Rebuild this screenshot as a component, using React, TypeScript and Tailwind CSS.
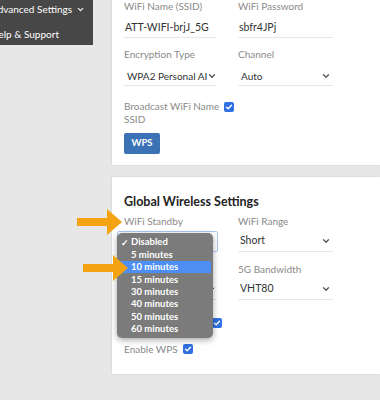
import React from 'react';
import { ChevronDown } from 'lucide-react';

const Check = ({ className = '' }: { className?: string }) => (
  <span className={`inline-flex items-center justify-center w-[10px] h-[10px] rounded-[2px] bg-[#2f6fe0] ${className}`}>
    <svg width="8" height="8" viewBox="0 0 8 8">
      <path d="M1.5 4.2 L3.2 5.8 L6.5 2.2" fill="none" stroke="#fff" strokeWidth="1.4" strokeLinecap="round" strokeLinejoin="round" />
    </svg>
  </span>
);

const Field = ({ label, value, select = false }: { label: string; value: string; select?: boolean }) => (
  <div className="flex flex-col">
    <span className="h-[12px] leading-[12px] text-[10px] text-[#8a8a8a] whitespace-nowrap">{label}</span>
    <div className={`mt-[7px] h-[19px] flex items-center justify-between border-b border-[#e6e6e6] pr-[2px] text-[10.5px] text-[#333] whitespace-nowrap ${select ? 'pl-[3px]' : 'pl-[1px]'}`}>
      <span className={select ? 'text-[10px]' : ''}>{value}</span>
      {select && <ChevronDown size={10} strokeWidth={3} className="text-[#555] shrink-0" />}
    </div>
  </div>
);

const Arrow = ({ className = '' }: { className?: string }) => (
  <svg className={className} width="46" height="28" viewBox="0 0 46 28">
    <path d="M0 10 H30 V1 L45 14 L30 27 V18 H0 Z" fill="#f6a313" />
  </svg>
);

const options = ['Disabled', '5 minutes', '10 minutes', '15 minutes', '30 minutes', '40 minutes', '50 minutes', '60 minutes'];

export default function App() {
  return (
    <div className="relative w-[380px] h-[400px] overflow-hidden bg-[#e7e7e7] flex font-['Lato','Open_Sans',sans-serif]">
      {/* Sidebar */}
      <aside className="w-[93px] shrink-0 overflow-hidden">
        <div className="h-[45px] bg-[#474747] -ml-[9px] pt-[1px] text-[10px] text-white whitespace-nowrap">
          <div className="h-[16px] flex items-center gap-[4px]">
            <span>Advanced Settings</span>
            <ChevronDown size={9} strokeWidth={3} />
          </div>
          <div className="h-[10px]" />
          <div className="h-[14px] flex items-center">Help &amp; Support</div>
        </div>
      </aside>

      {/* Main */}
      <main className="flex-1 pl-[19px] -mt-[10px] flex flex-col gap-[12px]">
        <section className="bg-white pt-[10px] pb-[11px] pl-[12px] shadow-[0_0_2px_rgba(0,0,0,0.12)]">
          <div className="grid grid-cols-[92px_95px] gap-x-[22px]">
            <Field label="WiFi Name (SSID)" value="ATT-WIFI-brjJ_5G" />
            <Field label="WiFi Password" value="sbfr4JPj" />
            <div className="mt-[10px]">
              <Field label="Encryption Type" value="WPA2 Personal AI" select />
            </div>
            <div className="mt-[10px]">
              <Field label="Channel" value="Auto" select />
            </div>
          </div>
          <div className="mt-[14px] flex items-start">
            <span className="w-[100px] text-[10px] leading-[13px] text-[#8a8a8a]">Broadcast WiFi Name SSID</span>
            <Check className="mt-[2px]" />
          </div>
          <button className="mt-[7px] h-[21px] w-[36px] rounded-[2px] bg-[#3a72b5] text-white text-[9.5px] font-bold">WPS</button>
        </section>

        <section className="h-[197px] bg-white pt-[17px] pl-[12px] shadow-[0_0_2px_rgba(0,0,0,0.12)]">
          <h2 className="h-[16px] leading-[16px] text-[12.5px] font-bold text-[#222]">Global Wireless Settings</h2>
          <div className="mt-[5px] grid grid-cols-[92px_95px] gap-x-[22px]">
            <div className="flex flex-col">
              <span className="h-[12px] leading-[12px] text-[10px] text-[#8a8a8a]">WiFi Standby</span>
              <div className="mt-[4px] -ml-[7px] -mr-[2px] h-[21px] flex items-center justify-end pr-[2px] rounded-[2px] border border-[#a9c8f2]">
                <ChevronDown size={8} strokeWidth={3} className="text-[#555]" />
              </div>
            </div>
            <div className="flex flex-col">
              <span className="h-[12px] leading-[12px] text-[10px] text-[#8a8a8a]">WiFi Range</span>
              <div className="mt-[4px] h-[21px] flex items-center justify-between border-b border-[#e6e6e6] pl-[2px] pr-[2px] text-[10.5px] text-[#333]">
                <span>Short</span>
                <ChevronDown size={10} strokeWidth={3} className="text-[#555]" />
              </div>
            </div>
            <div className="mt-[11px] flex flex-col">
              <span className="h-[12px]" />
              <div className="mt-[4px] h-[21px] flex items-center justify-end border-b border-[#e6e6e6]">
                <ChevronDown size={8} strokeWidth={3} className="text-[#555]" />
              </div>
            </div>
            <div className="mt-[11px] flex flex-col">
              <span className="h-[12px] leading-[12px] text-[10px] text-[#8a8a8a]">5G Bandwidth</span>
              <div className="mt-[4px] h-[21px] flex items-center justify-between border-b border-[#e6e6e6] pl-[2px] pr-[2px] text-[10.5px] text-[#333]">
                <span>VHT80</span>
                <ChevronDown size={10} strokeWidth={3} className="text-[#555]" />
              </div>
            </div>
          </div>
          <div className="mt-[17px] h-[12px] flex items-center">
            <span className="w-[88px]" />
            <Check />
          </div>
          <div className="mt-[14px] h-[12px] flex items-center gap-[5px]">
            <span className="text-[10px] text-[#8a8a8a]">Enable WPS</span>
            <Check />
          </div>
        </section>
      </main>

      {/* Native select popup */}
      <div className="absolute left-[117px] top-[233px] w-[96px] h-[105px] rounded-[5px] bg-[#7b7b7b] shadow-[0_2px_6px_rgba(0,0,0,0.35)] pt-[3px] px-[2px]">
        {options.map((o, i) => (
          <div
            key={o}
            className={`h-[12.4px] flex items-center text-[9.5px] font-bold text-white leading-none ${i === 2 ? 'bg-[#4c8ef4]' : ''}`}
          >
            <span className="w-[12px] pl-[2px] text-[9px]">{i === 0 ? '✓' : ''}</span>
            <span>{o}</span>
          </div>
        ))}
      </div>

      {/* Callout arrows */}
      <Arrow className="absolute left-[77px] top-[208px]" />
      <Arrow className="absolute left-[83px] top-[254px]" />
    </div>
  );
}
